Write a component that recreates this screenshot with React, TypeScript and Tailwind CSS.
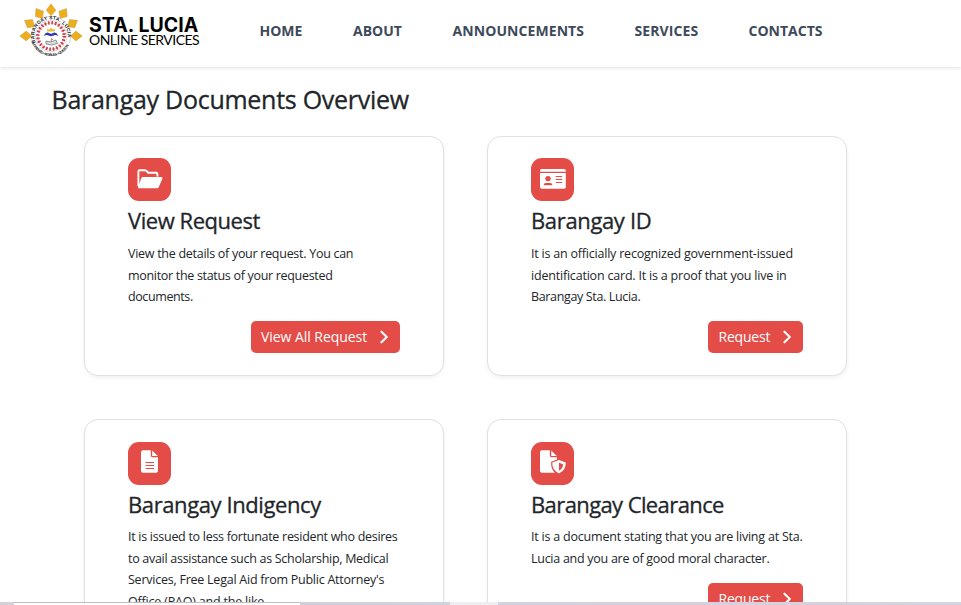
import type { ReactNode } from 'react';

const rays = [
  [51, 9.8, 0],
  [39.2, 13.5, -32],
  [63.3, 13.5, 32],
  [29.6, 23.5, -58],
  [72.5, 23.5, 58],
  [25.8, 36, -90],
  [76.3, 36, 90],
];

function Seal() {
  return (
    <svg width="64" height="58" viewBox="19 1 64 58" className="shrink-0">
      <defs>
        <path id="seal-top" d="M35.6 42.5 A16.7 16.7 0 1 1 66.4 42.5" />
        <path id="seal-bottom" d="M32.2 43.2 A20.2 20.2 0 0 0 69.8 43.2" />
      </defs>
      {rays.map(([x, y, a]) => (
        <path
          key={`${x}`}
          d="M0 -6 L4.9 0.4 L0 6 L-4.9 0.4 Z"
          fill="#edae1c"
          stroke="#b99a55"
          strokeWidth="0.4"
          transform={`translate(${x} ${y}) rotate(${a})`}
        />
      ))}
      <circle cx="51" cy="36" r="19.6" fill="#fff" />
      <path d="M32.6 43 A19.7 19.7 0 1 1 69.4 43" fill="none" stroke="#a8a8a8" strokeWidth="0.5" />
      <circle cx="51" cy="36" r="15.8" fill="none" stroke="#aaa" strokeWidth="0.4" />
      <circle cx="51" cy="36" r="13.2" fill="none" stroke="#c9303c" strokeWidth="3.4" strokeDasharray="1.5 1.96" />
      <circle cx="51" cy="36" r="13.2" fill="none" stroke="#d2525b" strokeWidth="0.9" strokeDasharray="2.6 0.86" strokeDashoffset="0.5" />
      <text className="font-['Liberation_Sans'] text-[4.8px] font-bold" fill="#222">
        <textPath href="#seal-top" textLength="60">BARANGAY STA. LUCIA</textPath>
      </text>
      <text className="font-['Liberation_Sans'] text-[3.6px] font-bold" fill="#111">
        <textPath href="#seal-bottom" textLength="46">LORENZO • ROBLES • QUEZON</textPath>
      </text>
      <path d="M47.3 31.5 L47 28.5 L49.3 29.8 L51 27.8 L52.8 29.8 L55 28.5 L54.7 31.5 Z" fill="#e5bd35" />
      <path d="M43.6 36 Q46 31.4 49 33 Q51 34.4 53 33 Q56 31.4 58.4 36 Q55 34.5 53.5 35.5 Q51 37 48.5 35.5 Q47 34.5 43.6 36 Z" fill="#3339a5" />
      <path d="M46 41 L50.8 42 L56 40 L57.5 43.5 L51.5 45 L46 44 Z" fill="#ddd" stroke="#555" strokeWidth="0.6" />
      <path d="M51 42 L51.5 38.5 L53 40" fill="none" stroke="#a66" strokeWidth="0.8" />
    </svg>
  );
}

const folder = (
  <>
    <path d="M10.4 28.2 V13.6 Q10.4 12.2 11.8 12.2 H16.8 Q17.6 12.2 18.2 12.8 L20.3 14.7 H28 Q29.4 14.7 29.4 16.1 V18.4" fill="none" stroke="#fff" strokeWidth="1.9" />
    <path d="M14.8 19 H33.2 Q35.2 19 34.4 20.8 L30.8 29 Q30.3 30.3 29 30.3 H11.2 Q9.5 30.3 10.1 28.8 L13.3 20.2 Q13.8 19 14.8 19 Z" fill="#fff" />
  </>
);

const idCard = (
  <>
    <path d="M9 13.8 V12.6 Q9 11 10.8 11 H33 Q34.8 11 34.8 12.6 V13.8 Z" fill="#fff" />
    <path d="M9 15 H34.8 V28.8 Q34.8 30.8 33 30.8 H10.8 Q9 30.8 9 28.8 Z" fill="#fff" />
    <circle cx="17" cy="20.6" r="2.7" fill="#e34c47" />
    <path d="M12.6 27.3 Q12.6 25 15 25 H19 Q21.4 25 21.4 27.3 Z" fill="#e34c47" />
    <path d="M24.7 18.5 H31.2 M24.7 21.5 H31.2 M24.7 24.5 H31.2" stroke="#e34c47" strokeWidth="1" />
  </>
);

const fileLines = (
  <>
    <path d="M15 8.3 H22.8 V13.6 Q22.8 15.3 24.5 15.3 H30 V28.8 Q30 30.8 28 30.8 H15 Q13 30.8 13 28.8 V10.3 Q13 8.3 15 8.3 Z" fill="#fff" />
    <path d="M24.2 8.5 L29.8 14 H24.2 Z" fill="#fff" />
    <path d="M17.6 20.5 H26 M17.6 23.5 H26 M17.6 26.5 H26" stroke="#e34c47" strokeWidth="1" />
  </>
);

const fileShield = (
  <>
    <path d="M11 8.3 H18.8 V13.6 Q18.8 15.3 20.5 15.3 H26 V17.4 L20.2 19.8 V23 Q20.6 28 24 30.8 H11 Q9 30.8 9 28.8 V10.3 Q9 8.3 11 8.3 Z" fill="#fff" />
    <path d="M20.2 8.5 L25.8 14 H20.2 Z" fill="#fff" />
    <path d="M28 18 L34.7 20.5 Q35.2 28 28 31.4 Q20.8 28 21.3 20.5 Z" fill="#fff" />
    <path d="M28 20.8 L32 22.2 Q32 26.3 28 28.7 Z" fill="#e34c47" />
  </>
);

type Line = [string, string];

function Card({ icon, title, tracking, lines, action, lower = false }: {
  icon: ReactNode;
  title: string;
  tracking: string;
  lines: Line[];
  action: string;
  lower?: boolean;
}) {
  return (
    <article
      className={`flex min-h-[240px] w-[360px] flex-col rounded-[14px] border border-[#dfe1e6] bg-white px-[43px] shadow-[0_2px_4px_rgba(0,0,0,0.06)] ${lower ? 'pt-[22px]' : 'pt-[21px]'}`}
    >
      <div className="h-[43px] w-[43px] rounded-[11px] bg-[#e34c47]">
        <svg width="43" height="43" viewBox="0 0 43 43">{icon}</svg>
      </div>
      <h2 className={`mt-[6px] text-[22px] leading-[26px] font-medium whitespace-nowrap [-webkit-text-stroke:0.3px_#212529] ${tracking}`}>{title}</h2>
      <div className={`text-[12.5px] leading-[21.5px] whitespace-nowrap ${lower ? 'mt-[9.4px]' : 'mt-[10.4px]'}`}>
        {lines.map(([text, spacing]) => (
          <p key={text} className={spacing}>{text}</p>
        ))}
      </div>
      <button
        className={`flex h-8 items-center justify-between self-end rounded-[5px] bg-[#e34c47] pr-[11px] text-[14px] text-white ${lower ? 'mt-[13.5px]' : 'mt-[13px]'} ${action === 'Request' ? 'w-[95px] pl-[10.5px] tracking-[-0.2px]' : 'w-[149px] pl-[10px] tracking-[-0.05px]'}`}
      >
        <span className="whitespace-nowrap">{action}</span>
        <svg width="10" height="14" viewBox="0 0 10 14" fill="none" stroke="#fff" strokeWidth="2.1" strokeLinecap="round" strokeLinejoin="round">
          <path d="M2.4 1.7 L7.8 7 L2.4 12.3" />
        </svg>
      </button>
    </article>
  );
}

export default function App() {
  return (
    <div className="flex h-[605px] w-[961px] flex-col overflow-hidden bg-white font-['Open_Sans',sans-serif] text-[#212529]">
      <header className="flex h-[67px] shrink-0 items-start pt-px pl-[19px] shadow-[0_1px_4px_rgba(0,0,0,0.12)]">
        <Seal />
        <div className="w-[176.5px] pt-[14px] pl-[6px] whitespace-nowrap text-black">
          <div className="font-['Inter',sans-serif] text-[19.5px] leading-[20px] font-bold tracking-[0.05px]">STA. LUCIA</div>
          <div className="-mt-[3px] font-['Lato',sans-serif] text-[14px] leading-[16px] tracking-[-0.52px]">ONLINE SERVICES</div>
        </div>
        <nav className="flex pt-[19.5px] text-[14px] leading-5 font-bold text-[#3d4a5b]">
          <a className="w-[93.5px]">HOME</a>
          <a className="w-[99.5px]">ABOUT</a>
          <a className="w-[182px] tracking-[0.08px]">ANNOUNCEMENTS</a>
          <a className="w-[114px] tracking-[0.1px]">SERVICES</a>
          <a>CONTACTS</a>
        </nav>
      </header>
      <main className="min-h-0 flex-1 overflow-hidden pt-[17px]">
        <h1 className="pl-[51.5px] text-[25px] leading-[30px] font-medium tracking-[-0.27px] [-webkit-text-stroke:0.3px_#212529]">Barangay Documents Overview</h1>
        <div className="mt-[22px] ml-[84px] grid w-[763px] grid-cols-2 gap-[43px]">
          <Card
            icon={folder}
            title="View Request"
            tracking="tracking-[-0.45px]"
            action="View All Request"
            lines={[
              ['View the details of your request. You can', 'tracking-[-0.28px]'],
              ['monitor the status of your requested', 'tracking-[-0.31px]'],
              ['documents.', 'tracking-[-0.4px]'],
            ]}
          />
          <Card
            icon={idCard}
            title="Barangay ID"
            tracking="tracking-[-0.35px]"
            action="Request"
            lines={[
              ['It is an officially recognized government-issued', 'tracking-[-0.21px]'],
              ['identification card. It is a proof that you live in', 'tracking-[-0.2px]'],
              ['Barangay Sta. Lucia.', 'tracking-[-0.35px]'],
            ]}
          />
          <Card
            lower
            icon={fileLines}
            title="Barangay Indigency"
            tracking="tracking-[-0.4px]"
            action="Request"
            lines={[
              ['It is issued to less fortunate resident who desires', 'tracking-[-0.29px]'],
              ['to avail assistance such as Scholarship, Medical', 'tracking-[-0.29px]'],
              ["Services, Free Legal Aid from Public Attorney's", 'tracking-[-0.24px]'],
              ['Office (PAO) and the like.', 'tracking-[-0.2px]'],
            ]}
          />
          <Card
            lower
            icon={fileShield}
            title="Barangay Clearance"
            tracking="tracking-[-0.6px]"
            action="Request"
            lines={[
              ['It is a document stating that you are living at Sta.', 'tracking-[-0.21px]'],
              ['Lucia and you are of good moral character.', 'tracking-[-0.27px]'],
            ]}
          />
        </div>
      </main>
      <footer className="flex h-[3px] shrink-0">
        <div className="w-[14px] bg-[#d4d1da]" />
        <div className="w-[286px] border-t border-[#bfbfbf] bg-white" />
        <div className="w-[150px] bg-gradient-to-r from-[#d0ced9] to-[#d0d4de]" />
        <div className="w-[48px] bg-[#ededf2]" />
        <div className="flex-1 bg-gradient-to-r from-[#d2d2df] via-[#d8d0dc] to-[#d2d5e0]" />
      </footer>
    </div>
  );
}
